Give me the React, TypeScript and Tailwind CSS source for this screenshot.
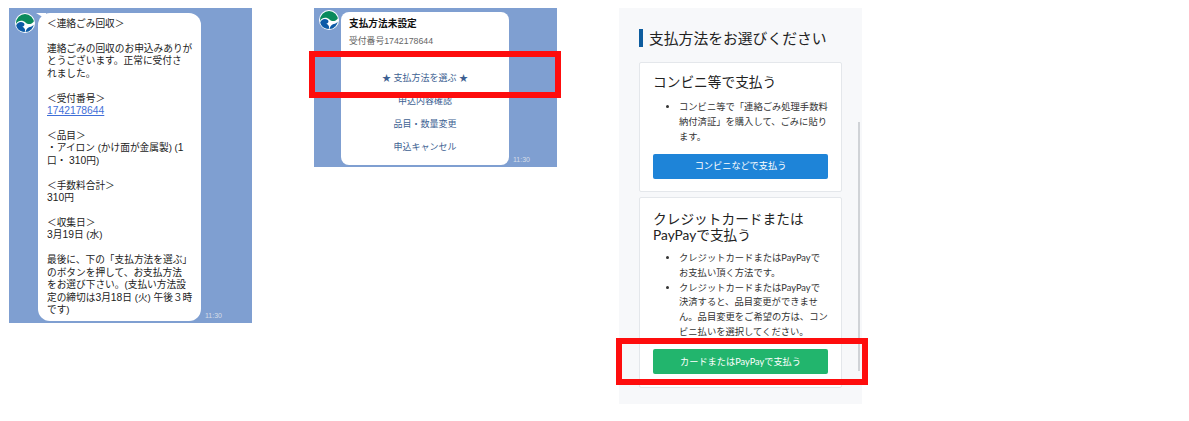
import React from 'react';

const chatFont = { fontFamily: '"Liberation Sans", "Noto Sans CJK JP", sans-serif' };

function Logo({ className }: { className: string }) {
  return (
    <svg viewBox="0 0 40 40" className={className}>
      <circle cx="20" cy="20" r="20" fill="#fff" />
      <circle cx="20" cy="20" r="18" fill="#0a8a5c" />
      <path d="M2 22C6 14 16 14 21 19c5 5 12 4 17-2 1 2 1 4 0 6-2 9-10 15-18 15C10 38 3 31 2 22z" fill="#fff" />
      <path d="M2.500 25c2-7 10-9 15-5 3 3 1 7-3 7 4 3 7 5 5 11C10 37 4 32 2.500 25z" fill="#0d5aa7" />
      <path d="M21 38c1-4 3-8 6-9 3-1 7-2 10-5-1 7-8 14-16 14z" fill="#0d5aa7" />
    </svg>
  );
}

function Time() {
  return <span className="block text-[7px] leading-none text-[#d5dde8] mb-[4px] ml-[4px]">11:30</span>;
}

// latin digits run a little bigger than the kana in the chat screenshots
function Mixed({ text }: { text: string }) {
  const parts = text.split(/([0-9]+)/);
  return (
    <>
      {parts.map((p, i) =>
        i % 2 === 1 ? <span key={i} className="text-[10.3px]">{p}</span> : <span key={i}>{p}</span>
      )}
    </>
  );
}

const msgLines = [
  '＜連絡ごみ回収＞',
  '',
  '連絡ごみの回収のお申込みありが',
  'とうございます。正常に受付さ',
  'れました。',
  '',
  '＜受付番号＞',
  'LINK',
  '',
  '＜品目＞',
  '・アイロン (かけ面が金属製) (1',
  '口・ 310円)',
  '',
  '＜手数料合計＞',
  '310円',
  '',
  '＜収集日＞',
  '3月19日 (水)',
  '',
  '最後に、下の「支払方法を選ぶ」',
  'のボタンを押して、お支払方法',
  'をお選び下さい。(支払い方法設',
  '定の締切は3月18日 (火) 午後３時',
  'です)',
];

function MessagePanel() {
  return (
    <div className="w-[243px] h-[315px] bg-[#7f9fd1] flex items-start pl-[6px] pt-[5px] shrink-0">
      <Logo className="w-[20px] h-[20px] shrink-0" />
      <div className="relative ml-[3px] w-[163px] h-[308px] bg-white rounded-[12px] pl-[9px] pt-[5px] text-[9.7px] leading-[12.45px] text-[#222] whitespace-nowrap">
        <div className="absolute -left-[2px] top-0 w-0 h-0 border-t-[6px] border-t-white border-l-[10px] border-l-transparent" />
        {msgLines.map((line, i) =>
          line === 'LINK' ? (
            <div key={i} className="h-[12.45px] text-[10.3px] text-[#3f6fd8] underline">1742178644</div>
          ) : (
            <div key={i} className="h-[12.45px]"><Mixed text={line} /></div>
          )
        )}
      </div>
      <div className="self-end">
        <Time />
      </div>
    </div>
  );
}

function StatusPanel() {
  return (
    <div className="relative w-[243px] h-[159px] bg-[#7f9fd1] flex items-start pl-[5px] pt-[2px] shrink-0">
      <Logo className="w-[20px] h-[20px] shrink-0" />
      <div className="ml-[2px] w-[168px] h-[153px] mt-[2px] bg-white rounded-[8px] pt-[6px]">
        <div className="pl-[8px] text-[9.7px] leading-[12px] font-bold text-[#111]">支払方法未設定</div>
        <div className="pl-[8px] mt-[5px] text-[8.8px] leading-[12px] text-[#666]">受付番号1742178644</div>
        <div className="flex flex-col items-center mt-[25px] gap-[11px] text-[9px] leading-[12px] text-[#3d5f92]">
          <div>★ 支払方法を選ぶ ★</div>
          <div>申込内容確認</div>
          <div>品目・数量変更</div>
          <div>申込キャンセル</div>
        </div>
      </div>
      <div className="self-end">
        <Time />
      </div>
      <div className="absolute left-[-5px] top-[43px] w-[252px] h-[47px] border-[6px] border-[#fe0d0d]" />
    </div>
  );
}

function PayCard({ title, items, button, color, box, listGap }: { title: string[]; items: string[][]; button: string; color: string; box: string; listGap: string }) {
  return (
    <div className={`bg-white border border-[#e4e7eb] rounded-[2px] px-[13px] ${box}`}>
      <div className="text-[13.7px] leading-[16px] text-[#222]">
        {title.map((t) => <div key={t}>{t}</div>)}
      </div>
      <ul className={`pl-[26px] list-disc text-[9.3px] leading-[14.8px] text-[#333] whitespace-nowrap ${listGap}`}>
        {items.map((lines) => (
          <li key={lines[0]}>
            {lines.map((l) => <div key={l}>{l}</div>)}
          </li>
        ))}
      </ul>
      <div className={`mt-[9.5px] h-[25px] rounded-[2px] flex items-center justify-center text-[9.2px] text-white ${color}`}>{button}</div>
    </div>
  );
}

function PaymentPanel() {
  return (
    <div className="relative w-[243px] h-[396px] bg-[#f7f8fa] px-[20px] pt-[21px] shrink-0" style={{ fontFamily: 'Lato, "Noto Sans CJK JP", sans-serif' }}>
      <div className="border-l-[4px] border-[#0d5c9e] pl-[6px] h-[18px] flex items-center text-[14.8px] leading-none text-[#222] whitespace-nowrap">支払方法をお選びください</div>
      <div className="mt-[15px] flex flex-col gap-[5px]">
        <PayCard
          title={['コンビニ等で支払う']}
          items={[['コンビニ等で「連絡ごみ処理手数料', '納付済証」を購入して、ごみに貼り', 'ます。']]}
          button="コンビニなどで支払う"
          color="bg-[#1e84d8]"
          box="h-[130px] pt-[11px]"
          listGap="mt-[10px]"
        />
        <PayCard
          title={['クレジットカードまたは', 'PayPayで支払う']}
          items={[
            ['クレジットカードまたはPayPayで', 'お支払い頂く方法です。'],
            ['クレジットカードまたはPayPayで', '決済すると、品目変更ができませ', 'ん。品目変更をご希望の方は、コン', 'ビニ払いを選択してください。'],
          ]}
          button="カードまたはPayPayで支払う"
          color="bg-[#22b56d]"
          box="h-[191px] pt-[13px]"
          listGap="mt-[8px]"
        />
      </div>
      <div className="absolute left-[239px] top-[114px] w-[2px] h-[249px] bg-[#d0d3d7]" />
      <div className="absolute left-[-3px] top-[330px] w-[252px] h-[47px] border-[6px] border-[#fe0d0d]" />
    </div>
  );
}

export default function App() {
  return (
    <div className="w-[1189px] h-[421px] bg-white overflow-hidden flex items-start pt-[8px] pl-[9px] gap-[62px]" style={chatFont}>
      <MessagePanel />
      <StatusPanel />
      <PaymentPanel />
    </div>
  );
}
